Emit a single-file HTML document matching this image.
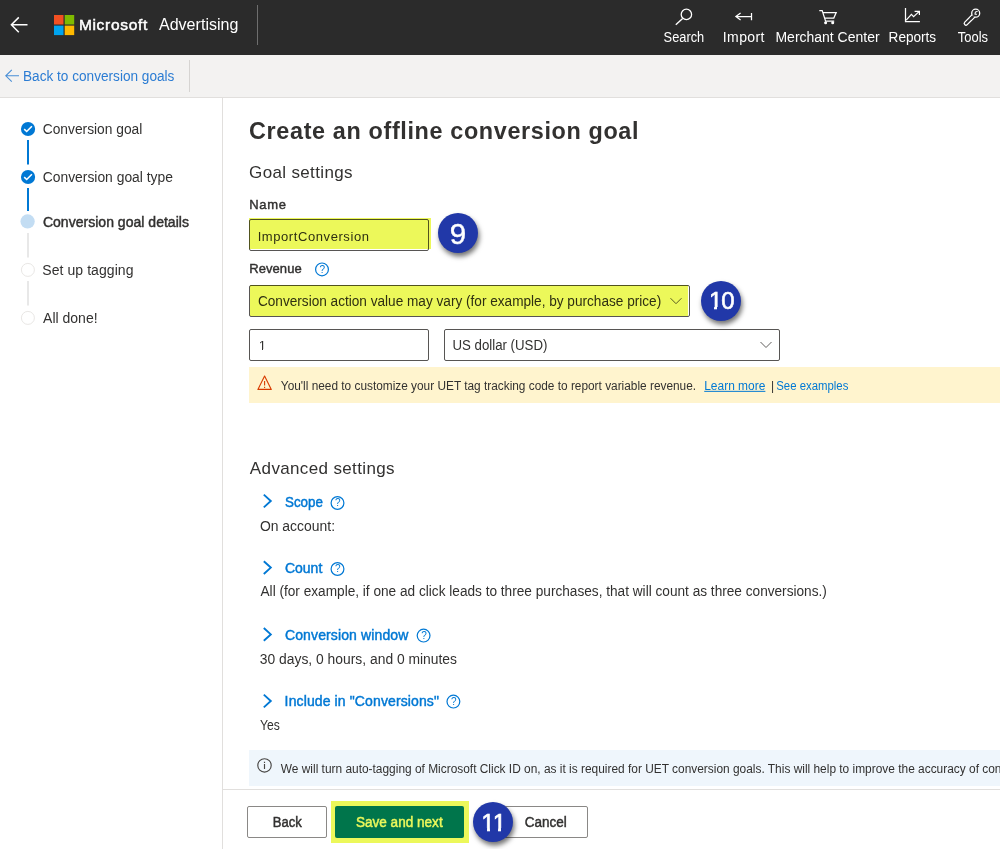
<!DOCTYPE html>
<html lang="en"><head><meta charset="utf-8"><title>Create an offline conversion goal</title>
<style>
html,body{margin:0;padding:0;}
body{width:1000px;height:849px;position:relative;overflow:hidden;background:#fff;color:#323130;font-family:"Liberation Sans",sans-serif;}
.t{position:absolute;white-space:nowrap;line-height:1;transform-origin:0 0;}
.a{position:absolute;}
svg{position:absolute;overflow:visible;}
.hdr{left:0;top:0;width:1000px;height:55px;background:#2b2b2b;}
.sub{left:0;top:55px;width:1000px;height:42px;background:#f3f2f1;border-bottom:1px solid #e1dfdd;}
.side{left:0;top:98px;width:222px;height:751px;background:#fff;border-right:1px solid #e1dfdd;}
.inp{border:1px solid #575553;border-radius:2px;box-sizing:border-box;background:#fff;}
.hl{background:#ecf85a;mix-blend-mode:multiply;z-index:5;}
.badge{width:40px;height:40px;border-radius:50%;background:#2138a8;box-shadow:1.5px 3.5px 5px rgba(0,0,0,.55);z-index:6;}
.btn{border:1px solid #8a8886;border-radius:2px;box-sizing:border-box;background:#fff;}
.ft{background:#2138a8;z-index:8;}

</style></head>
<body>
<div class="a hdr"></div>
<div class="a sub"></div>
<div class="a side"></div>
<div class="a" style="left:222px;top:789px;width:778px;height:1px;background:#e1dfdd;"></div>

<!-- header icons -->
<svg width="1000" height="98" style="left:0;top:0" viewBox="0 0 1000 98" fill="none">
  <path d="M27.5 24.8H11.5M18.8 17.4L11.4 24.8L18.8 32.2" stroke="#fff" stroke-width="1.5"/>
  <rect x="54" y="15" width="9.5" height="9.5" fill="#f25022"/>
  <rect x="64.7" y="15" width="9.5" height="9.5" fill="#7fba00"/>
  <rect x="54" y="25.6" width="9.5" height="9.5" fill="#00a4ef"/>
  <rect x="64.7" y="25.6" width="9.5" height="9.5" fill="#ffb900"/>
  <rect x="257" y="5" width="1" height="40" fill="#6e6e6e"/>
  <!-- search -->
  <circle cx="686.4" cy="14.4" r="5.2" stroke="#fff" stroke-width="1.3"/>
  <path d="M682.6 18.6L675.8 24.7" stroke="#fff" stroke-width="1.4"/>
  <!-- import -->
  <path d="M751.5 13V20.2M751.5 16.5H736M740.6 13.1L735.9 16.5L740.6 19.9" stroke="#fff" stroke-width="1.25"/>
  <!-- cart -->
  <path d="M819.3 10.6H822.2L825.6 21.2H834.2M823 12.5H836.2L833.8 18H824.8" stroke="#fff" stroke-width="1.25"/>
  <circle cx="825.6" cy="22.7" r="1.5" fill="#fff"/>
  <circle cx="832.7" cy="22.7" r="1.5" fill="#fff"/>
  <!-- reports -->
  <path d="M905.5 8.1V21.5H919.9" stroke="#fff" stroke-width="1.25"/>
  <path d="M906.2 20.2L911.4 14.3L913.6 16.6L919 11.6M914.6 11.4H919.4V15" stroke="#fff" stroke-width="1.2"/>
  <!-- tools -->
  <path d="M966 23.4L973.4 16" stroke="#fff" stroke-width="4.8" stroke-linecap="round"/>
  <path d="M966 23.4L973.4 16" stroke="#2b2b2b" stroke-width="2.2" stroke-linecap="round"/>
  <circle cx="975.7" cy="13.2" r="4" stroke="#fff" stroke-width="1.3" fill="#2b2b2b"/>
  <path d="M973.4 16L970.5 18.9" stroke="#2b2b2b" stroke-width="2.2"/>
  <path d="M977.6 11.3L975.4 12.1L975 14L976.8 14.4" stroke="#fff" stroke-width="1.1"/>
  <!-- sub header -->
  <path d="M19 75.8H6M11.8 69.9L5.8 75.8L11.8 81.7" stroke="#4a8fd6" stroke-width="1.1"/>
  <rect x="189" y="60" width="1" height="32" fill="#d6d4d2"/>
</svg>

<!-- stepper -->
<svg width="222" height="340" style="left:0;top:0" viewBox="0 0 222 340" fill="none">
  <rect x="27" y="140" width="2" height="24.5" fill="#0078d4"/>
  <rect x="27" y="188" width="2" height="23" fill="#0078d4"/>
  <rect x="27" y="233" width="2" height="24.5" fill="#e8e8e8"/>
  <rect x="27" y="281" width="2" height="24.5" fill="#e8e8e8"/>
  <circle cx="28.05" cy="129" r="7.1" fill="#0078d4"/>
  <path d="M24.2 129.2L26.7 131.5L31.9 126.3" stroke="#fff" stroke-width="1.6"/>
  <circle cx="28.05" cy="177" r="7.1" fill="#0078d4"/>
  <path d="M24.2 177.2L26.7 179.5L31.9 174.3" stroke="#fff" stroke-width="1.6"/>
  <circle cx="27.6" cy="221.45" r="7.15" fill="#c3ddf3"/>
  <circle cx="27.9" cy="269.9" r="6.5" fill="#fff" stroke="#e9e7e5" stroke-width="1"/>
  <circle cx="27.9" cy="317.9" r="6.5" fill="#fff" stroke="#e9e7e5" stroke-width="1"/>
</svg>

<!-- name input -->
<div class="a inp" style="left:249px;top:219px;width:180px;height:32px;"></div>
<div class="a hl" style="left:249px;top:218px;width:182px;height:31px;"></div>
<div class="a badge" style="left:438px;top:213px;"></div>
<!-- revenue dropdown -->
<div class="a inp" style="left:249px;top:285px;width:441px;height:32px;"></div>
<div class="a hl" style="left:250px;top:285.3px;width:438px;height:31px;"></div>
<div class="a badge" style="left:701px;top:280.7px;"></div>
<!-- amount / currency -->
<div class="a inp" style="left:249px;top:329px;width:180px;height:32px;"></div>
<div class="a inp" style="left:444px;top:329px;width:336px;height:32px;"></div>
<!-- warning banner -->
<div class="a" style="left:249px;top:367px;width:751px;height:35.5px;background:#fff4ce;"></div>
<!-- info banner -->
<div class="a" style="left:249px;top:750px;width:751px;height:35.5px;background:#eff6fc;"></div>
<!-- buttons -->
<div class="a btn" style="left:247px;top:806px;width:80px;height:32px;"></div>
<div class="a" style="left:335px;top:806px;width:129px;height:32px;background:#0078d4;border-radius:2px;"></div>
<div class="a hl" style="left:331px;top:801px;width:138px;height:42px;"></div>
<div class="a btn" style="left:504px;top:806px;width:83.5px;height:32px;"></div>
<div class="a badge" style="left:473px;top:802px;"></div>
<!-- trim the foot serifs of the digit 1 so it reads like the reference face -->
<div class="a" style="left:258.5px;top:348.6px;width:3.2px;height:2px;background:#fff;z-index:8;"></div>
<div class="a" style="left:263.45px;top:348.6px;width:3.5px;height:2px;background:#fff;z-index:8;"></div>
<div class="a ft" style="left:709px;top:306.5px;width:5.4px;height:3.6px;"></div>
<div class="a ft" style="left:717.4px;top:306.5px;width:4.4px;height:3.6px;"></div>
<div class="a ft" style="left:481px;top:827.6px;width:5.9px;height:4.6px;"></div>
<div class="a ft" style="left:490.1px;top:827.6px;width:8.1px;height:4.6px;"></div>
<div class="a ft" style="left:501.1px;top:827.6px;width:5.4px;height:4.6px;"></div>

<svg width="1000" height="849" style="left:0;top:0" viewBox="0 0 1000 849" fill="none">
  <!-- dropdown chevrons -->
  <path d="M670.5 298.2L676 303.7L681.5 298.2" stroke="#605e5c" stroke-width="1"/>
  <path d="M760.5 342L766 347.5L771.5 342" stroke="#605e5c" stroke-width="1"/>
  <!-- help icons -->
  <g stroke="#0078d4" stroke-width="1.2">
    <circle cx="322" cy="269.4" r="6.4"/>
    <circle cx="337.5" cy="503" r="6.4"/>
    <circle cx="337.5" cy="569" r="6.4"/>
    <circle cx="423.6" cy="635.6" r="6.4"/>
    <circle cx="453.4" cy="701.6" r="6.4"/>
  </g>
  <!-- section chevrons -->
  <g stroke="#0078d4" stroke-width="1.9">
    <path d="M263.8 494.6L270.8 501L263.8 507.4"/>
    <path d="M263.8 561.2L270.8 567.6L263.8 574"/>
    <path d="M263.8 628L270.8 634.4L263.8 640.8"/>
    <path d="M263.8 694.6L270.8 701L263.8 707.4"/>
  </g>
  <!-- warning icon -->
  <path d="M264.6 376L271.3 389.4H257.9L264.6 376Z" stroke="#d83b01" stroke-width="1.1" stroke-linejoin="round"/>
  <path d="M264.6 381V385.6M264.6 386.8V388" stroke="#d83b01" stroke-width="1.1"/>
  <!-- info icon -->
  <circle cx="264.5" cy="765.4" r="6.7" stroke="#484644" stroke-width="1.15"/>
  <path d="M264.5 764.1V769.1M264.5 761.7V763" stroke="#484644" stroke-width="1.15"/>
</svg>

<span class="t" style="left:78px;top:17px;font-size:15.5px;-webkit-text-stroke:0.50px;color:#ffffff;transform:translate(0.89px,0.38px);letter-spacing:0.685px;">Microsoft</span>
<span class="t" style="left:158px;top:16px;font-size:16px;color:#ffffff;transform:translate(0.95px,0.96px);letter-spacing:0.033px;">Advertising</span>
<span class="t" style="left:663px;top:30px;font-size:14px;color:#ffffff;transform:translate(0.60px,0.15px) scaleX(0.9153);">Search</span>
<span class="t" style="left:722px;top:30px;font-size:14px;color:#ffffff;transform:translate(0.80px,0.15px);letter-spacing:0.387px;">Import</span>
<span class="t" style="left:775px;top:30px;font-size:14px;color:#ffffff;transform:translate(0.47px,0.15px) scaleX(0.9982);">Merchant Center</span>
<span class="t" style="left:888px;top:30px;font-size:14px;color:#ffffff;transform:translate(0.60px,0.15px) scaleX(0.9693);">Reports</span>
<span class="t" style="left:957px;top:30px;font-size:14px;color:#ffffff;transform:translate(0.84px,0.15px) scaleX(0.9227);">Tools</span>
<span class="t" style="left:23px;top:69px;font-size:14px;color:#2b7cd3;transform:translate(0.03px,0.15px) scaleX(0.9725);">Back to conversion goals</span>
<span class="t" style="left:42px;top:122px;font-size:14px;transform:translate(0.72px,0.40px) scaleX(0.9845);">Conversion goal</span>
<span class="t" style="left:42px;top:170px;font-size:14px;transform:translate(0.71px,0.40px) scaleX(0.9901);">Conversion goal type</span>
<span class="t" style="left:42px;top:214px;font-size:14px;-webkit-text-stroke:0.45px;transform:translate(0.90px,0.65px);letter-spacing:0.023px;">Conversion goal details</span>
<span class="t" style="left:42px;top:262px;font-size:14px;transform:translate(0.35px,0.90px);letter-spacing:0.061px;">Set up tagging</span>
<span class="t" style="left:43px;top:310px;font-size:14px;transform:translate(0.06px,0.65px);letter-spacing:0.006px;">All done!</span>
<span class="t" style="left:249px;top:119px;font-size:23.4px;font-weight:700;transform:translate(0.10px,0.59px);letter-spacing:0.633px;">Create an offline conversion goal</span>
<span class="t" style="left:249px;top:163px;font-size:17px;transform:translate(0.10px,0.61px);letter-spacing:0.348px;">Goal settings</span>
<span class="t" style="left:249px;top:197px;font-size:13px;-webkit-text-stroke:0.42px;transform:translate(0.21px,1.00px);letter-spacing:0.691px;">Name</span>
<span class="t" style="left:257px;top:230px;font-size:13px;transform:translate(0.63px,0.25px);letter-spacing:0.583px;">ImportConversion</span>
<span class="t" style="left:249px;top:261px;font-size:13px;-webkit-text-stroke:0.42px;transform:translate(0.21px,1.00px);letter-spacing:0.076px;">Revenue</span>
<span class="t" style="left:257px;top:294px;font-size:14px;transform:translate(0.96px,0.15px) scaleX(0.9722);">Conversion action value may vary (for example, by purchase price)</span>
<span class="t" style="left:258px;top:338px;font-size:13px;transform:translate(0.80px,1.00px);">1</span>
<span class="t" style="left:452px;top:338px;font-size:14px;transform:translate(0.45px,0.15px) scaleX(0.9461);">US dollar (USD)</span>
<span class="t" style="left:280px;top:379px;font-size:12px;transform:translate(0.85px,0.84px) scaleX(0.9873);">You&#x27;ll need to customize your UET tag tracking code to report variable revenue.</span>
<span class="t" style="left:704px;top:379px;font-size:12px;color:#0078d4;transform:translate(0.22px,0.84px) scaleX(0.9964);text-decoration:underline;">Learn more</span>
<span class="t" style="left:771px;top:379px;font-size:12px;transform:translate(0.05px,0.84px);">|</span>
<span class="t" style="left:776px;top:379px;font-size:12px;color:#0078d4;transform:translate(0.25px,0.84px) scaleX(0.9486);">See examples</span>
<span class="t" style="left:249px;top:459px;font-size:17px;transform:translate(0.87px,0.61px);letter-spacing:0.357px;">Advanced settings</span>
<span class="t" style="left:284px;top:495px;font-size:14px;-webkit-text-stroke:0.45px;color:#0078d4;transform:translate(0.99px,0.15px) scaleX(0.9535);">Scope</span>
<span class="t" style="left:259px;top:518px;font-size:14px;transform:translate(0.93px,0.90px) scaleX(0.9944);">On account:</span>
<span class="t" style="left:284px;top:561px;font-size:14px;-webkit-text-stroke:0.45px;color:#0078d4;transform:translate(0.96px,0.15px) scaleX(0.9991);">Count</span>
<span class="t" style="left:260px;top:584px;font-size:14px;transform:translate(0.50px,0.40px) scaleX(0.9743);">All (for example, if one ad click leads to three purchases, that will count as three conversions.)</span>
<span class="t" style="left:284px;top:628px;font-size:14px;-webkit-text-stroke:0.45px;color:#0078d4;transform:translate(0.94px,0.15px);letter-spacing:0.127px;">Conversion window</span>
<span class="t" style="left:259px;top:651px;font-size:14px;transform:translate(0.85px,0.90px) scaleX(0.9895);">30 days, 0 hours, and 0 minutes</span>
<span class="t" style="left:284px;top:694px;font-size:14px;-webkit-text-stroke:0.45px;color:#0078d4;transform:translate(0.62px,0.15px);letter-spacing:0.120px;">Include in &quot;Conversions&quot;</span>
<span class="t" style="left:260px;top:717px;font-size:14px;transform:translate(0.09px,0.65px) scaleX(0.8673);">Yes</span>
<span class="t" style="left:280px;top:762px;font-size:12px;transform:translate(0.80px,0.64px) scaleX(0.9922);">We will turn auto-tagging of Microsoft Click ID on, as it is required for UET conversion goals. This will help to improve the accuracy of conversion tracking.</span>
<span class="t" style="left:272px;top:815px;font-size:14px;-webkit-text-stroke:0.45px;transform:translate(0.69px,0.15px) scaleX(0.9340);">Back</span>
<span class="t" style="left:355px;top:815px;font-size:14px;-webkit-text-stroke:0.45px;color:#ffffff;transform:translate(0.93px,0.15px) scaleX(0.9691);">Save and next</span>
<span class="t" style="left:524px;top:815px;font-size:14px;-webkit-text-stroke:0.45px;transform:translate(0.76px,0.15px) scaleX(0.9652);">Cancel</span>
<span class="t" style="left:449px;top:218px;font-size:30px;color:#ffffff;transform:translate(0.71px,0.50px) scaleX(0.9867);z-index:7;-webkit-text-stroke:0.4px;">9</span>
<span class="t" style="left:709px;top:288px;font-size:24px;color:#ffffff;transform:translate(0.00px,0.98px);z-index:7;-webkit-text-stroke:0.6px;letter-spacing:-1.1px;">10</span>
<span class="t" style="left:481px;top:811px;font-size:23px;color:#ffffff;transform:translate(0.50px,0.63px);z-index:7;-webkit-text-stroke:0.7px;letter-spacing:0.4px;">11</span>
<span class="t" style="left:319px;top:264px;font-size:10px;color:#0078d4;transform:translate(0.60px,0.54px);">?</span>
<span class="t" style="left:335px;top:498px;font-size:10px;color:#0078d4;transform:translate(0.10px,0.14px);">?</span>
<span class="t" style="left:335px;top:564px;font-size:10px;color:#0078d4;transform:translate(0.10px,0.13px);">?</span>
<span class="t" style="left:421px;top:630px;font-size:10px;color:#0078d4;transform:translate(0.20px,0.74px);">?</span>
<span class="t" style="left:451px;top:696px;font-size:10px;color:#0078d4;transform:translate(0.00px,0.74px);">?</span>
</body></html>
